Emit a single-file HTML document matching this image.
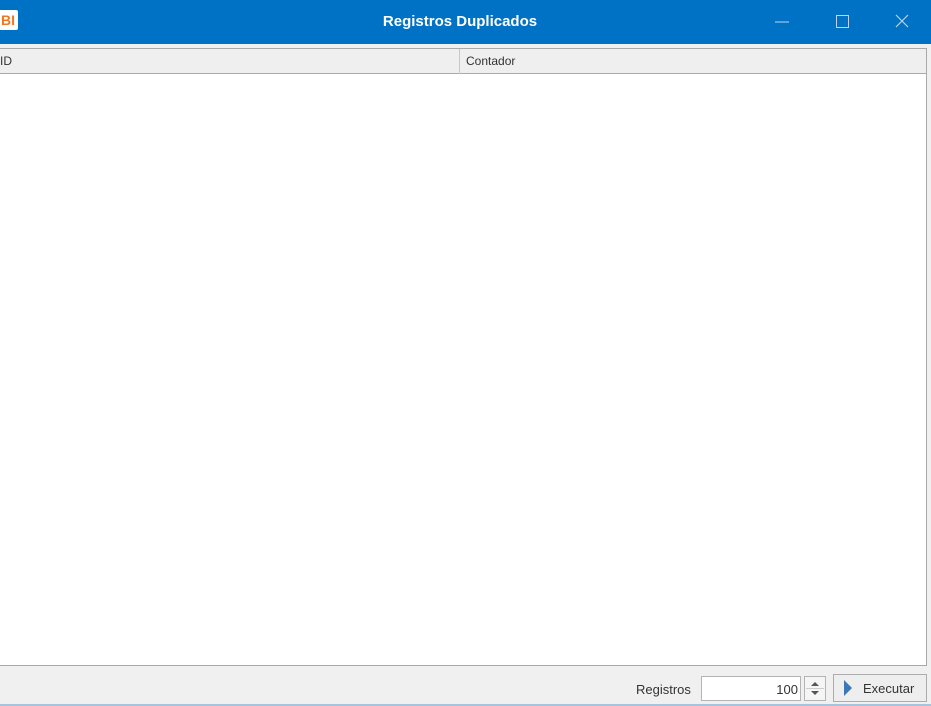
<!DOCTYPE html>
<html><head><meta charset="utf-8"><style>
*{margin:0;padding:0;box-sizing:border-box}
body{width:931px;height:706px;overflow:hidden;background:#f0f0f0;font-family:"Liberation Sans",sans-serif;font-size:12px;color:#333;position:relative}
.tb{position:absolute;left:0;top:0;width:931px;height:44px;background:#0072c6}
.title{position:absolute;left:0;width:920px;top:13px;text-align:center;color:#fff;font-weight:bold;font-size:15px}
.logo{position:absolute;left:-2px;top:10px;width:20px;height:20px;background:#fff;border-radius:2px;color:#f07820;font-weight:bold;font-size:14px;line-height:20px;text-align:center}
.grid{position:absolute;left:-2px;top:48px;width:929px;height:618px;border:1px solid #a9a9a9;background:#fff}
.hdr{position:absolute;left:0;top:0;right:0;height:25px;background:#efefef;border-bottom:1px solid #a9a9a9}
.hdr span{position:absolute;top:5px}
.div{position:absolute;left:460px;top:0;width:1px;height:25px;background:#c8c8c8}
.inp{position:absolute;left:701px;top:676px;width:100px;height:25px;background:#fff;border:1px solid #b4b4b4;text-align:right;padding:5px 2px 0 0;font-size:13px}
.spin{position:absolute;left:804px;top:676px;width:22px;height:25px;border:1px solid #b4b4b4;background:#f5f5f5}
.btn{position:absolute;left:833px;top:674px;width:94px;height:28px;border:1px solid #acacac;background:#eee;font-size:13px}
.bot{position:absolute;left:0;top:704px;width:931px;height:2px;background:#a8c4dc}
</style></head><body>
<div class="tb"><div class="logo">BI</div><div class="title">Registros Duplicados</div>
<svg style="position:absolute;left:760px;top:0" width="171" height="44">
<line x1="15" y1="22" x2="29" y2="22" stroke="#bcd4ec" stroke-width="1"/>
<rect x="76.5" y="15.5" width="12" height="12" fill="none" stroke="#bcd4ec"/>
<path d="M136 15 L148 27 M148 15 L136 27" stroke="#bcd4ec" stroke-width="1.2"/>
</svg></div>
<div class="grid"><div class="hdr"><span style="left:1px">ID</span><div class="div"></div><span style="left:467px">Contador</span></div></div>
<div style="position:absolute;left:636px;top:682px;font-size:13px">Registros</div>
<div class="inp">100</div>
<div class="spin"><svg width="20" height="23"><path d="M6 9 L10 5 L14 9Z M6 14 L10 18 L14 14Z" fill="#555"/><line x1="1" y1="11.5" x2="19" y2="11.5" stroke="#ccc"/></svg></div>
<div class="btn"><svg style="position:absolute;left:9px;top:5px" width="10" height="16"><path d="M1 0 L9 8 L1 16Z" fill="#3c78b4"/></svg><span style="position:absolute;left:29px;top:6px">Executar</span></div>
<div class="bot"></div>
</body></html>
